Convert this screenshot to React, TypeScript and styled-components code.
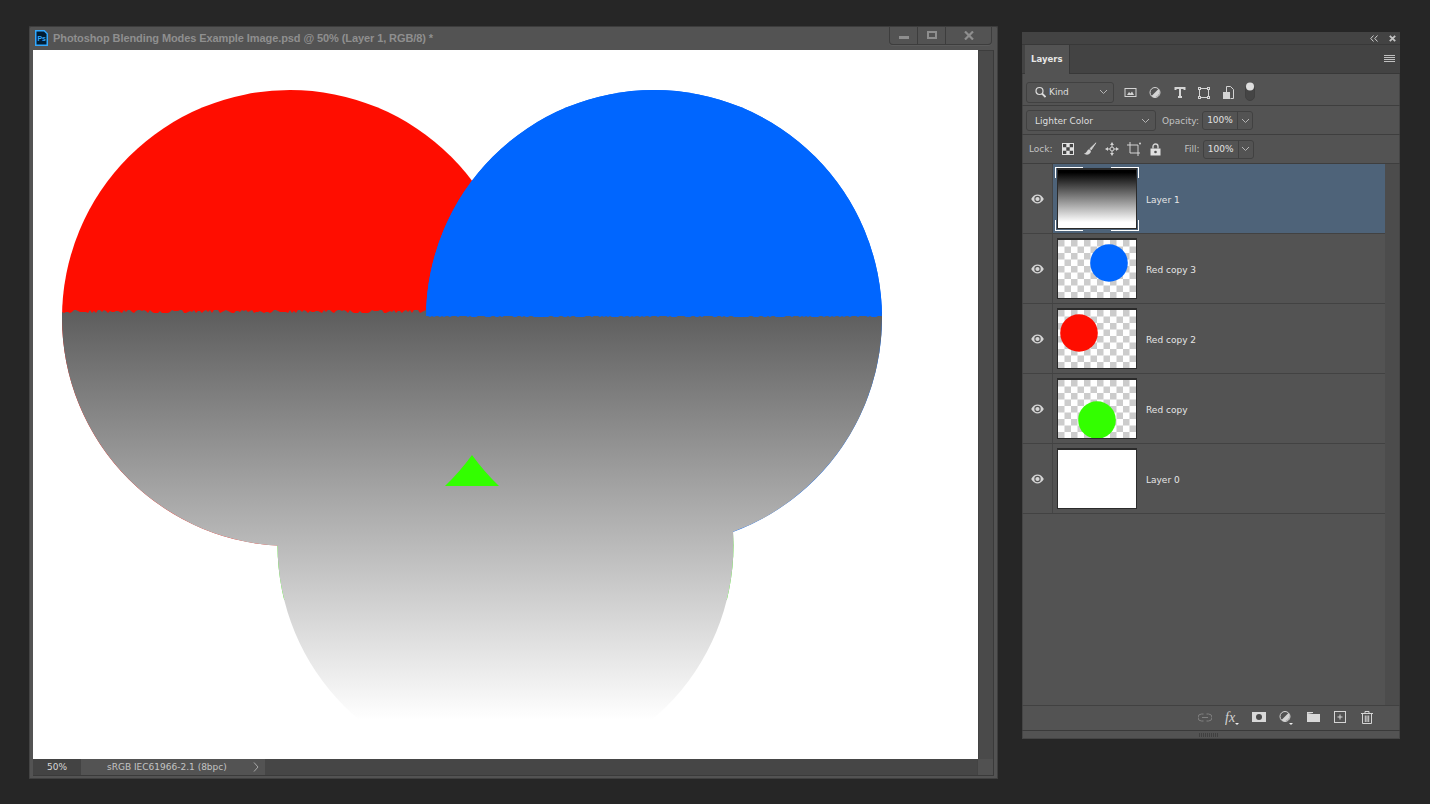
import React from "react";
import styled, { createGlobalStyle } from "styled-components";

const Global = createGlobalStyle`
  * { box-sizing: border-box; }
  html, body { margin: 0; height: 804px; overflow: hidden; background: #262626; }
  body { font-family: "DejaVu Sans", "Liberation Sans", sans-serif; }
`;

const Page = styled.div`
  display: flex;
  align-items: flex-start;
  gap: 24px;
  padding: 26px 0 0 29px;
  width: 1430px;
  height: 804px;
  background: #262626;
`;

/* Document window */
const DocWindow = styled.section`
  width: 969px;
  height: 753px;
  display: flex;
  flex-direction: column;
  background: #535353;
  border-radius: 2px 2px 0 0;
  box-shadow: inset -1px 0 0 #3f3f3f, inset 0 -1px 0 #3f3f3f, inset 0 1px 0 #3c3c3c, inset 1px 0 0 #444;
`;
const TitleBar = styled.header`
  height: 24px;
  display: flex;
  align-items: flex-start;
  padding: 0 6px 0 6px;
`;
const PsBadge = styled.svg`
  width: 13px;
  height: 16px;
  margin-top: 4px;
  flex: none;
`;
const DocTitle = styled.h1`
  margin: 4px 0 0 5px;
  flex: 1;
  font: bold 11px/17px "Liberation Sans", Arial, sans-serif;
  letter-spacing: -0.09px;
  color: #8f8f8f;
  white-space: nowrap;
`;
const WinControls = styled.div`
  display: flex;
  height: 19px;
  border: 1px solid #3d3d3d;
  border-top: 0;
  border-radius: 0 0 4px 4px;
  box-shadow: 0 1px 0 #5c5c5c;
`;
const WinButton = styled.div<{ $w: number }>`
  width: ${(p) => p.$w}px;
  display: flex;
  align-items: center;
  justify-content: center;
  & + & { border-left: 1px solid #3d3d3d; }
`;
const DocBody = styled.div`
  display: flex;
  height: 709px;
  padding-left: 4px;
`;
const Canvas = styled.svg`
  display: block;
  width: 945px;
  height: 709px;
  flex: none;
  background: #fff;
`;
const VScroll = styled.div`
  width: 16px;
  background: #4a4a4a;
  border-left: 1px solid #434343;
  border-right: 1px solid #3a3a3a;
  border-top: 1px solid #3d3d3d;
`;
const StatusBar = styled.footer`
  margin-left: 4px;
  width: 961px;
  height: 17px;
  display: flex;
  border-bottom: 1px solid #3a3a3a;
  border-right: 1px solid #3a3a3a;
  color: #c4c4c4;
  font: 9px/16px "DejaVu Sans", sans-serif;
`;
const ZoomCell = styled.div`
  width: 48px;
  background: #434343;
  padding-left: 14px;
  color: #d8d8d8;
`;
const ProfileCell = styled.div`
  width: 184px;
  background: #535353;
  padding-left: 26px;
  display: flex;
  justify-content: space-between;
  align-items: center;
`;
const StatusFill = styled.div`
  flex: 1;
  background: #464646;
`;
const StatusCorner = styled.div`
  width: 16px;
  background: #515151;
  border-left: 1px solid #434343;
`;

/* Layers panel */
const Panel = styled.aside`
  margin-top: 6px;
  width: 378px;
  height: 707px;
  display: flex;
  flex-direction: column;
  background: #535353;
  border-radius: 2px 2px 0 0;
  box-shadow: inset 0 0 0 1px #454545;
`;
const CollapseBar = styled.div`
  height: 13px;
  background: #434343;
  border-bottom: 1px solid #383838;
  display: flex;
  justify-content: flex-end;
  align-items: center;
  gap: 11px;
  padding: 0 4px 0 0;
`;
const TabBar = styled.div`
  height: 29px;
  background: #434343;
  border-bottom: 1px solid #383838;
  display: flex;
  align-items: center;
  justify-content: space-between;
  padding: 0 5px 0 3px;
`;
const Tab = styled.div`
  width: 45px;
  height: 29px;
  background: #535353;
  border-right: 1px solid #383838;
  color: #e6e6e6;
  font: bold 8.5px/28px "DejaVu Sans", sans-serif;
  padding-left: 6px;
`;
const ToolRow = styled.div<{ $h: number; $top: number }>`
  height: ${(p) => p.$h}px;
  display: flex;
  align-items: center;
  padding: ${(p) => p.$top}px 0 0 4px;
  border-bottom: 1px solid #3e3e3e;
  color: #c9c9c9;
  font: 9px/12px "DejaVu Sans", sans-serif;
`;
const Select = styled.div<{ $w: number }>`
  width: ${(p) => p.$w}px;
  height: 21px;
  flex: none;
  display: flex;
  align-items: center;
  padding: 0 5px 0 8px;
  gap: 3px;
  border: 1px solid #414141;
  border-radius: 3px;
  color: #dedede;
`;
const SelectText = styled.span`
  flex: 1;
`;
const IconGroup = styled.div<{ $gap: number; $left: number }>`
  display: flex;
  align-items: center;
  gap: ${(p) => p.$gap}px;
  margin-left: ${(p) => p.$left}px;
`;
const Label = styled.label<{ $left: number }>`
  margin-left: ${(p) => p.$left}px;
  margin-right: 3px;
  color: #c2c2c2;
`;
const Stepper = styled.div`
  width: 51px;
  height: 19px;
  flex: none;
  display: flex;
  align-items: center;
  border: 1px solid #414141;
  border-radius: 3px;
  color: #e2e2e2;
`;
const StepperValue = styled.span`
  width: 35px;
  text-align: center;
  border-right: 1px solid #414141;
  line-height: 17px;
`;
const StepperArrow = styled.span`
  flex: 1;
  display: flex;
  justify-content: center;
`;
const ListArea = styled.div`
  height: 541px;
  display: flex;
`;
const Rows = styled.div`
  width: 363px;
`;
const ListScroll = styled.div`
  flex: 1;
  background: #4c4c4c;
  margin-right: 1px;
`;
const Row = styled.div`
  height: 70px;
  display: flex;
  border-bottom: 1px solid #424242;
  color: #e6e6e6;
  font: 9px/12px "DejaVu Sans", sans-serif;
  padding-left: 1px;
`;
const EyeCell = styled.div`
  width: 30px;
  flex: none;
  display: flex;
  align-items: center;
  justify-content: center;
  border-right: 1px solid #454545;
  padding-top: 1px;
`;
const RowMain = styled.div<{ $selected?: boolean }>`
  flex: 1;
  display: flex;
  align-items: center;
  padding-left: 4px;
  background: ${(p) => (p.$selected ? "#4e6379" : "transparent")};
`;
const LayerName = styled.span`
  padding-top: 2px;
`;
const ThumbBox = styled.div`
  position: relative;
  width: 80px;
  height: 61px;
  flex: none;
  margin-right: 9px;
  border: 1px solid #2b2b2b;
  border-top-width: 2px;
  background: #fff;
`;
const ThumbArt = styled.svg`
  display: block;
  width: 78px;
  height: 58px;
`;
const Corner = styled.i<{ $x: "left" | "right"; $y: "top" | "bottom" }>`
  position: absolute;
  ${(p) => p.$x}: -3px;
  ${(p) => p.$y}: -3px;
  width: 28px;
  height: 11px;
  border-${(p) => p.$x}: 1px solid #fff;
  border-${(p) => p.$y}: 1px solid #fff;
`;
const PanelFooter = styled.div`
  height: 26px;
  display: flex;
  align-items: center;
  justify-content: flex-end;
  gap: 13px;
  padding: 0 26px 2px 0;
  border-top: 1px solid #414141;
  border-bottom: 1px solid #3a3a3a;
`;
const FooterSlot = styled.span`
  width: 14px;
  height: 14px;
  display: flex;
  align-items: center;
  justify-content: center;
`;
const Grip = styled.div`
  height: 8px;
  display: flex;
  justify-content: center;
  align-items: center;
  padding-right: 4px;
`;
const GripLines = styled.span`
  width: 20px;
  height: 4px;
  background: repeating-linear-gradient(90deg, #404040 0 1px, transparent 1px 2px);
`;
const Ico = styled.svg<{ $ml?: number; $mb?: number; $mt?: number }>`
  display: block;
  flex: none;
  margin-left: ${(p) => p.$ml ?? 0}px;
  margin-bottom: ${(p) => p.$mb ?? 0}px;
  margin-top: ${(p) => p.$mt ?? 0}px;
`;

const L = "#d4d4d4";

const Chevron = ({ c = "#b5b5b5" }: { c?: string }) => (
  <Ico width="9" height="6" viewBox="0 0 9 6"><path d="M1 1l3.5 3.5L8 1" fill="none" stroke={c} strokeWidth="1" /></Ico>
);
const Eye = () => (
  <Ico width="13" height="10" viewBox="0 0 13 10">
    <path d="M.2 5C2 2 4 .6 6.500.6S11 2 12.800 5C11 8 9 9.400 6.500 9.400S2 8 .2 5z" fill="#d6d6d6" />
    <circle cx="6.500" cy="5" r="3.200" fill="#535353" />
    <circle cx="6.500" cy="5" r="2.100" fill="#d6d6d6" />
  </Ico>
);

const jagged = (y: number, amp: number, x0: number, x1: number, below: boolean) => {
  const edge = below ? 760 : 0;
  const pts: string[] = [`${x0},${edge}`, `${x0},${y}`];
  let seed = 17;
  for (let x = x0; x <= x1; x += 2) {
    seed = (seed * 73 + 41) % 101;
    pts.push(`${x},${y + (seed % (amp + 1))}`);
  }
  pts.push(`${x1},${edge}`);
  return pts.join(" ");
};

const CanvasArt = () => (
  <Canvas viewBox="33 50 945 709">
    <defs>
      <linearGradient id="fade" gradientUnits="userSpaceOnUse" x1="0" y1="76" x2="0" y2="720">
        <stop offset="0" stopColor="#000" />
        <stop offset="1" stopColor="#fff" />
      </linearGradient>
      <clipPath id="union">
        <circle cx="505.500" cy="545" r="228" />
        <circle cx="290" cy="318" r="228" />
        <circle cx="654" cy="318" r="228" />
      </clipPath>
      <clipPath id="belowRed"><polygon points={jagged(310, 3, 40, 900, true)} /></clipPath>
      <clipPath id="aboveBlue"><polygon points={jagged(316, 1, 420, 890, false)} /></clipPath>
      <clipPath id="greenEdge"><rect x="200" y="300" width="600" height="300" /></clipPath>
    </defs>
    <circle cx="505.500" cy="545" r="228" fill="#33ff00" clipPath="url(#greenEdge)" />
    <circle cx="290" cy="318" r="228" fill="#ff0d00" />
    <circle cx="654" cy="318" r="228" fill="#0066ff" />
    <g clipPath="url(#belowRed)">
      <rect x="40" y="300" width="860" height="440" fill="url(#fade)" clipPath="url(#union)" />
    </g>
    <circle cx="654" cy="318" r="228" fill="#0066ff" clipPath="url(#aboveBlue)" />
    <path d="M445 486A228 228 0 0 0 472 455A228 228 0 0 0 499 486z" fill="#33ff00" />
  </Canvas>
);

const Thumb = ({ color, cx, cy }: { color: string; cx: number; cy: number }) => (
  <ThumbBox>
    <ThumbArt viewBox="0 0 78 58">
      <defs>
        <pattern id={`chk${cx}`} width="13" height="13" patternUnits="userSpaceOnUse">
          <rect width="13" height="13" fill="#fff" />
          <rect width="6.500" height="6.500" fill="#ccc" />
          <rect x="6.500" y="6.500" width="6.500" height="6.500" fill="#ccc" />
        </pattern>
      </defs>
      <rect width="78" height="58" fill={`url(#chk${cx})`} />
      <circle cx={cx} cy={cy} r="18.800" fill={color} />
    </ThumbArt>
  </ThumbBox>
);

const LayerRow = ({ name, children, selected }: { name: string; children: React.ReactNode; selected?: boolean }) => (
  <Row>
    <EyeCell><Eye /></EyeCell>
    <RowMain $selected={selected}>
      {children}
      <LayerName>{name}</LayerName>
    </RowMain>
  </Row>
);

export default function App() {
  return (
    <Page>
      <Global />
      <DocWindow>
        <TitleBar>
          <PsBadge viewBox="0 0 13 16">
            <path d="M.75.75h8.500l3 3v11.500H.75z" fill="#001d34" stroke="#31a8ff" strokeWidth="1.500" />
            <text x="2.400" y="10.500" fontSize="7" fontWeight="bold" fontFamily="Liberation Sans" fill="#31a8ff">Ps</text>
          </PsBadge>
          <DocTitle>Photoshop Blending Modes Example Image.psd @ 50% (Layer 1, RGB/8) *</DocTitle>
          <WinControls>
            <WinButton $w={27}>
              <Ico width="10" height="3" viewBox="0 0 10 3" $mt={5}><rect width="10" height="3" fill="#8e8e8e" /></Ico>
            </WinButton>
            <WinButton $w={28}>
              <Ico width="10" height="8" viewBox="0 0 10 8"><rect x="1" y="1" width="8" height="6" fill="none" stroke="#8e8e8e" strokeWidth="2" /></Ico>
            </WinButton>
            <WinButton $w={46}>
              <Ico width="10" height="9" viewBox="0 0 10 9"><path d="M1 .5l8 8M9 .5l-8 8" stroke="#8e8e8e" strokeWidth="2.200" /></Ico>
            </WinButton>
          </WinControls>
        </TitleBar>
        <DocBody>
          <CanvasArt />
          <VScroll />
        </DocBody>
        <StatusBar>
          <ZoomCell>50%</ZoomCell>
          <ProfileCell>
            <span>sRGB IEC61966-2.1 (8bpc)</span>
            <Ico width="14" height="10" viewBox="0 0 14 10"><path d="M3 .5L7 5l-4 4.500" fill="none" stroke="#a8a8a8" /></Ico>
          </ProfileCell>
          <StatusFill />
          <StatusCorner />
        </StatusBar>
      </DocWindow>

      <Panel>
        <CollapseBar>
          <Ico width="8" height="7" viewBox="0 0 8 7"><path d="M3.500.5L.8 3.500l2.700 3M7.500.5L4.800 3.500l2.700 3" fill="none" stroke="#cfcfcf" /></Ico>
          <Ico width="7" height="7" viewBox="0 0 7 7"><path d="M.8.8l5.400 5.400M6.200.8L.8 6.200" stroke="#c4c4c4" strokeWidth="1.800" /></Ico>
        </CollapseBar>
        <TabBar>
          <Tab>Layers</Tab>
          <Ico width="11" height="8" viewBox="0 0 11 8"><path d="M0 .5h11M0 2.500h11M0 4.500h11M0 6.500h11" stroke="#c0c0c0" /></Ico>
        </TabBar>
        <ToolRow $h={32} $top={5}>
          <Select $w={88}>
            <Ico width="11" height="12" viewBox="0 0 11 12">
              <circle cx="4.500" cy="5" r="3.500" fill="none" stroke="#dcdcdc" strokeWidth="1.200" />
              <path d="M7 7.500L10.500 11" stroke="#dcdcdc" strokeWidth="1.800" />
            </Ico>
            <SelectText>Kind</SelectText>
            <Chevron />
          </Select>
          <IconGroup $gap={12} $left={10}>
            <Ico width="13" height="13" viewBox="0 0 13 13">
              <rect x="1" y="2.500" width="11" height="8" fill="none" stroke={L} />
              <path d="M3 9l2-3 1.500 1.500L8 5.500 10 9z" fill={L} />
            </Ico>
            <Ico width="12" height="13" viewBox="0 0 12 13">
              <circle cx="6" cy="6.500" r="5" fill="none" stroke={L} />
              <path d="M9.500 3L2.500 10A5 5 0 0 0 9.500 3z" fill={L} />
            </Ico>
            <Ico width="12" height="13" viewBox="0 0 12 13" $ml={1}>
              <path d="M1.500 4V2h9v2M6 2v9M4 11h4" fill="none" stroke={L} strokeWidth="2" />
            </Ico>
            <Ico width="12" height="13" viewBox="0 0 12 13">
              <rect x="1.500" y="2.500" width="9" height="9" fill="none" stroke={L} />
              <path d="M0 1h3v3H0zM9 1h3v3H9zM0 10h3v3H0zM9 10h3v3H9z" fill={L} />
              <path d="M1 2h1v1H1zM10 2h1v1h-1zM1 11h1v1H1zM10 11h1v1h-1z" fill="#535353" />
            </Ico>
            <Ico width="11" height="13" viewBox="0 0 11 13" $ml={1}>
              <path d="M3.500 6V.5h4l3 3v9h-3" fill="none" stroke={L} />
              <rect x="0" y="6" width="7" height="7" fill={L} />
            </Ico>
            <Ico width="10" height="19" viewBox="0 0 10 19" $ml={-1} $mb={1}>
              <rect x=".5" y="2.500" width="9" height="16" rx="4.500" fill="#454545" stroke="#404040" />
              <circle cx="5" cy="4.500" r="4" fill="#dedede" />
            </Ico>
          </IconGroup>
        </ToolRow>
        <ToolRow $h={29} $top={1}>
          <Select $w={130}>
            <SelectText>Lighter Color</SelectText>
            <Chevron />
          </Select>
          <Label $left={6}>Opacity:</Label>
          <Stepper><StepperValue>100%</StepperValue><StepperArrow><Chevron /></StepperArrow></Stepper>
        </ToolRow>
        <ToolRow $h={29} $top={0}>
          <Label $left={3}>Lock:</Label>
          <IconGroup $gap={8} $left={6}>
            <Ico width="13" height="13" viewBox="0 0 13 13">
              <rect x=".5" y=".5" width="11" height="11" fill="#e2e2e2" stroke="#e2e2e2" />
              <path d="M1 1h3.300v3.300H1zM7.700 1H11v3.300H7.700zM4.300 4.300h3.400v3.400H4.300zM1 7.700h3.300V11H1zM7.700 7.700H11V11H7.700z" fill="#444" />
            </Ico>
            <Ico width="14" height="14" viewBox="0 0 14 14">
              <path d="M13 .8L7 6.600l1.200 1.300z" fill={L} stroke={L} strokeWidth=".8" />
              <path d="M6.300 7.200C3.600 7.400 4.800 10.600 1 11.600c1.800 2 6.400 1.600 7-2.600z" fill={L} />
            </Ico>
            <Ico width="14" height="14" viewBox="0 0 14 14">
              <path d="M7 .5v13M.5 7h13" stroke={L} />
              <path d="M7 .5l2 2.500H5zM7 13.500L5 11h4zM.5 7L3 5v4zM13.500 7L11 9V5z" fill={L} />
              <circle cx="7" cy="7" r="2" fill="#535353" stroke={L} />
            </Ico>
            <Ico width="15" height="14" viewBox="0 0 15 14">
              <path d="M3 0v11h10M0 3h11v11" fill="none" stroke={L} />
              <circle cx="13" cy="1.500" r="1" fill={L} />
            </Ico>
            <Ico width="11" height="13" viewBox="0 0 11 13">
              <path d="M3 5.500V3.500a2.500 2.500 0 0 1 5 0v2" fill="none" stroke={L} strokeWidth="1.400" />
              <path d="M.5 5.500h10v7H.5z" fill="#e2e2e2" />
              <circle cx="5.500" cy="9" r="1.300" fill="#535353" />
            </Ico>
          </IconGroup>
          <Label $left={24}>Fill:</Label>
          <Stepper><StepperValue>100%</StepperValue><StepperArrow><Chevron /></StepperArrow></Stepper>
        </ToolRow>
        <ListArea>
          <Rows>
            <LayerRow name="Layer 1" selected>
              <ThumbBox>
                <ThumbArt viewBox="0 0 78 58">
                  <defs>
                    <linearGradient id="thumbFade" x1="0" y1="0" x2="0" y2="1">
                      <stop offset="0.04" stopColor="#000" />
                      <stop offset="0.9" stopColor="#fff" />
                    </linearGradient>
                  </defs>
                  <rect width="78" height="58" fill="url(#thumbFade)" />
                </ThumbArt>
                <Corner $x="left" $y="top" />
                <Corner $x="right" $y="top" />
                <Corner $x="left" $y="bottom" />
                <Corner $x="right" $y="bottom" />
              </ThumbBox>
            </LayerRow>
            <LayerRow name="Red copy 3"><Thumb color="#0066ff" cx={51} cy={23} /></LayerRow>
            <LayerRow name="Red copy 2"><Thumb color="#ff0d00" cx={21} cy={23} /></LayerRow>
            <LayerRow name="Red copy"><Thumb color="#33ff00" cx={39} cy={40} /></LayerRow>
            <LayerRow name="Layer 0"><ThumbBox /></LayerRow>
          </Rows>
          <ListScroll />
        </ListArea>
        <PanelFooter>
          <FooterSlot>
            <Ico width="14" height="9" viewBox="0 0 14 9">
              <path d="M5.500 1H3.500a3.500 3.500 0 0 0 0 7h2M8.500 1h2a3.500 3.500 0 0 1 0 7h-2M4 4.500h6" fill="none" stroke="#818181" />
            </Ico>
          </FooterSlot>
          <FooterSlot>
            <Ico width="14" height="15" viewBox="0 0 14 15">
              <text x="0" y="11.500" fontSize="14" fontStyle="italic" fontFamily="Liberation Serif" fill={L}>fx</text>
              <path d="M10 13h4l-2 2z" fill="#eee" />
            </Ico>
          </FooterSlot>
          <FooterSlot>
            <Ico width="14" height="10" viewBox="0 0 14 10">
              <rect width="14" height="10" fill="#d8d8d8" />
              <circle cx="7" cy="5" r="3" fill="#4a4a4a" />
            </Ico>
          </FooterSlot>
          <FooterSlot>
            <Ico width="14" height="15" viewBox="0 0 14 15">
              <circle cx="6" cy="6.500" r="5" fill="none" stroke={L} />
              <path d="M9.500 3L2.500 10A5 5 0 0 0 9.500 3z" fill={L} />
              <path d="M10 13h4l-2 2z" fill="#eee" />
            </Ico>
          </FooterSlot>
          <FooterSlot>
            <Ico width="13" height="10" viewBox="0 0 13 10">
              <path d="M0 2V0h6v1h0zM0 2h13v8H0z" fill="#d8d8d8" />
            </Ico>
          </FooterSlot>
          <FooterSlot>
            <Ico width="12" height="12" viewBox="0 0 12 12">
              <rect x=".5" y=".5" width="11" height="11" fill="none" stroke={L} />
              <path d="M6 3.500v5M3.500 6h5" stroke={L} />
            </Ico>
          </FooterSlot>
          <FooterSlot>
            <Ico width="12" height="13" viewBox="0 0 12 13">
              <path d="M0 2.500h12M4 2.500V.5h4v2M1.500 3v9.500h9V3M4.300 4.500v6.500M6 4.500v6.500M7.700 4.500v6.500" fill="none" stroke={L} />
            </Ico>
          </FooterSlot>
        </PanelFooter>
        <Grip><GripLines /></Grip>
      </Panel>
    </Page>
  );
}
